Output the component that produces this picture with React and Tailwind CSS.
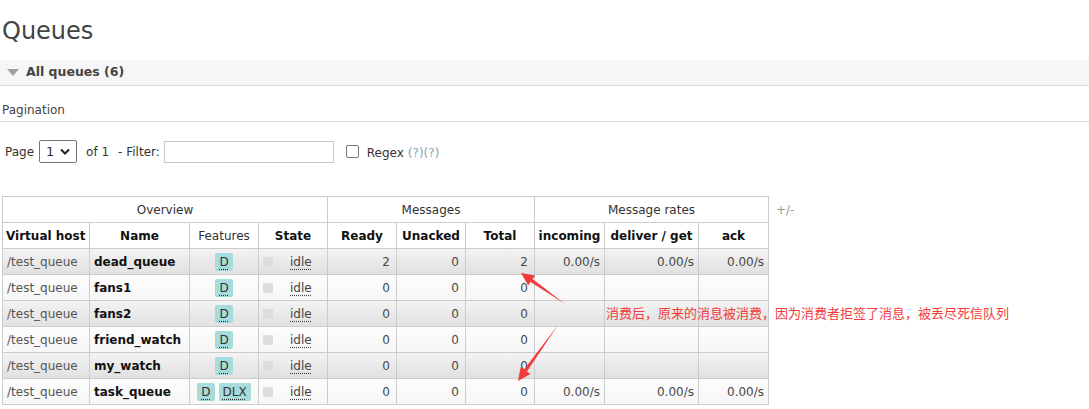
import React from 'react';

const rows = [
  { name: 'dead_queue', features: ['D'], ready: 2, unacked: 0, total: 2, rates: true },
  { name: 'fans1', features: ['D'], ready: 0, unacked: 0, total: 0, rates: false },
  { name: 'fans2', features: ['D'], ready: 0, unacked: 0, total: 0, rates: false },
  { name: 'friend_watch', features: ['D'], ready: 0, unacked: 0, total: 0, rates: false },
  { name: 'my_watch', features: ['D'], ready: 0, unacked: 0, total: 0, rates: false },
  { name: 'task_queue', features: ['D', 'DLX'], ready: 0, unacked: 0, total: 0, rates: true },
];

const Badge = ({ label }) => (
  <span className="inline-block h-[18px] px-[4px] bg-[#a6dcdc] rounded-[2px] leading-[18px] text-[#333]">
    <span className="underline decoration-dotted underline-offset-[3px] decoration-[#333]">{label}</span>
  </span>
);

const Arrow = ({ x1, y1, x2, y2 }) => {
  const a = Math.atan2(y2 - y1, x2 - x1);
  const len = 13;
  const w = 6;
  const bx = x2 - Math.cos(a) * len;
  const by = y2 - Math.sin(a) * len;
  const px = -Math.sin(a) * w;
  const py = Math.cos(a) * w;
  return (
    <g fill="#f03c3c" stroke="none">
      <polygon
        points={`${x1},${y1} ${bx + px * 0.3},${by + py * 0.3} ${bx - px * 0.3},${by - py * 0.3}`}
      />
      <polygon points={`${x2},${y2} ${bx + px},${by + py} ${bx - px},${by - py}`} />
    </g>
  );
};

export default function App() {
  const td = 'border border-[#ccc] h-[26px] py-0';
  return (
    <div className="w-[1089px] h-[409px] overflow-hidden bg-white text-[12px] text-[#484848] font-['DejaVu_Sans','Noto_Sans_CJK_SC',sans-serif]">
      {/* Title */}
      <h1 className="pt-[16px] pl-[2px] h-[46px] text-[24px] leading-[30px] text-[#444] font-normal">Queues</h1>

      {/* Section header */}
      <div className="mt-[14px] h-[26px] bg-[#f6f6f6] border-b border-[#ddd] flex items-center pl-[7px] gap-[7px]">
        <span className="w-0 h-0 border-l-[6px] border-r-[6px] border-t-[7px] border-l-transparent border-r-transparent border-t-[#a0a0a0]" />
        <span className="font-bold text-[#444] text-[12.5px]">All queues (6)</span>
      </div>

      {/* Pagination */}
      <div className="mt-[14px] h-[22px] border-b border-[#ddd] pl-[2px] leading-[21px] text-[#444]">Pagination</div>

      <div className="mt-[18px] h-[23px] flex items-center pl-[5px] text-[#333]">
        <span>Page</span>
        <span className="ml-[5px] w-[38px] h-[23px] border border-[#767676] rounded-[2px] flex items-center justify-between px-[6px] bg-white">
          <span className="text-[13px]">1</span>
          <svg width="10" height="7" viewBox="0 0 10 7"><path d="M1 1.5 L5 5.5 L9 1.5" stroke="#222" strokeWidth="2" fill="none" /></svg>
        </span>
        <span className="ml-[9px]">of 1</span>
        <span className="ml-[9px]">- Filter:</span>
        <span className="ml-[4px] w-[170px] h-[22px] border border-[#c8c8c8] bg-white" />
        <span className="ml-[12px] w-[13px] h-[13px] border border-[#767676] rounded-[2px] bg-white" />
        <span className="ml-[8px] mt-[2px]">Regex</span>
        <span className="ml-[4px] mt-[2px] text-[#8aa0b8]">(?)(?)</span>
      </div>

      {/* Table */}
      <div className="mt-[33px] pl-[2px] flex items-start">
        <div className="relative">
          <table className="border-collapse table-fixed w-[766px] text-[12px]">
            <colgroup>
              <col className="w-[87px]" />
              <col className="w-[100px]" />
              <col className="w-[69px]" />
              <col className="w-[69px]" />
              <col className="w-[69px]" />
              <col className="w-[69px]" />
              <col className="w-[69px]" />
              <col className="w-[70px]" />
              <col className="w-[94px]" />
              <col className="w-[70px]" />
            </colgroup>
            <thead>
              <tr className="text-[#333]">
                <th colSpan={4} className={`${td} font-normal text-center`}>Overview</th>
                <th colSpan={3} className={`${td} font-normal text-center`}>Messages</th>
                <th colSpan={3} className={`${td} font-normal text-center`}>Message rates</th>
              </tr>
              <tr className="text-[#111]">
                <th className={`${td} font-bold px-[3px] text-left`}>Virtual host</th>
                <th className={`${td} font-bold text-center`}>Name</th>
                <th className={`${td} font-normal text-center text-[#333]`}>Features</th>
                <th className={`${td} font-bold text-center`}>State</th>
                <th className={`${td} font-bold text-center`}>Ready</th>
                <th className={`${td} font-bold text-center`}>Unacked</th>
                <th className={`${td} font-bold text-center`}>Total</th>
                <th className={`${td} font-bold text-center px-0`}>incoming</th>
                <th className={`${td} font-bold text-center px-0`}>deliver / get</th>
                <th className={`${td} font-bold text-center`}>ack</th>
              </tr>
            </thead>
            <tbody>
              {rows.map((r, i) => (
                <tr
                  key={r.name}
                  className={i % 2 === 0 ? 'bg-linear-to-b from-[#f3f3f3] to-[#e0e0e0]' : 'bg-linear-to-b from-[#fdfdfd] to-[#f6f6f6]'}
                >
                  <td className={`${td} pl-[4px] text-[#555]`}>/test_queue</td>
                  <td className={`${td} pl-[4px] font-bold text-[#111]`}>{r.name}</td>
                  <td className={`${td} text-center`}>
                    <span className="inline-flex gap-[4px] align-middle">
                      {r.features.map((f) => (
                        <Badge key={f} label={f} />
                      ))}
                    </span>
                  </td>
                  <td className={`${td} pl-[4px]`}>
                    <span className="flex items-center">
                      <span className="w-[10px] h-[10px] bg-[#ddd]" />
                      <span className="ml-[17px] underline decoration-dotted underline-offset-[3px] text-[#444]">idle</span>
                    </span>
                  </td>
                  <td className={`${td} text-right pr-[6px]`}>{r.ready}</td>
                  <td className={`${td} text-right pr-[6px]`}>{r.unacked}</td>
                  <td className={`${td} text-right pr-[6px]`}>{r.total}</td>
                  <td className={`${td} text-right pr-[4px]`}>{r.rates ? '0.00/s' : ''}</td>
                  <td className={`${td} text-right pr-[4px]`}>{r.rates ? '0.00/s' : ''}</td>
                  <td className={`${td} text-right pr-[4px]`}>{r.rates ? '0.00/s' : ''}</td>
                </tr>
              ))}
            </tbody>
          </table>

          {/* annotation overlay */}
          <svg className="absolute left-0 top-0 pointer-events-none" width="780" height="210">
            <Arrow x1={563} y1={108} x2={519} y2={77} />
            <Arrow x1={556} y1={129} x2={516} y2={185} />
          </svg>
          <span className="absolute left-[604px] top-[109px] whitespace-nowrap text-[13px] leading-[16px] text-[#f23c3c] font-['Noto_Sans_CJK_SC',sans-serif]">
            消费后，原来的消息被消费，因为消费者拒签了消息，被丢尽死信队列
          </span>
        </div>
        <span className="ml-[7px] mt-[5px] text-[#999]">+/-</span>
      </div>
    </div>
  );
}
